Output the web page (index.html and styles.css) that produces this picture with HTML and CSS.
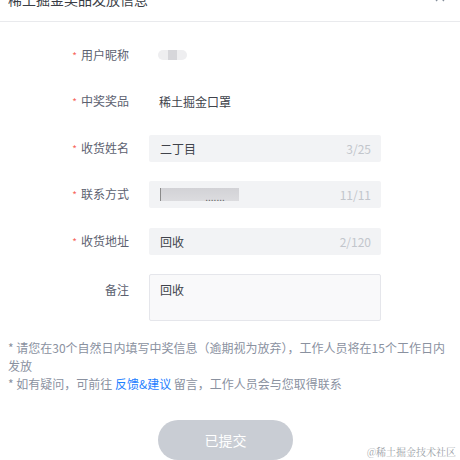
FILE: index.html
```html
<!DOCTYPE html>
<html lang="zh-CN">
<head>
<meta charset="utf-8">
<link rel="stylesheet" href="styles.css">
</head>
<body>
<div class="dialog">
  <div class="header">
    <div class="title">稀土掘金奖品发放信息</div>
    <svg class="close" width="10" height="10" viewBox="0 0 10 10"><path d="M1 1L9 9M9 1L1 9" stroke="#86909c" stroke-width="1.3" fill="none"/></svg>
  </div>
  <div class="form">
    <div class="row">
      <div class="label req">用户昵称</div>
      <div class="value"><span class="blur-nick"><span class="blur-core"></span></span></div>
    </div>
    <div class="row">
      <div class="label req">中奖奖品</div>
      <div class="value">稀土掘金口罩</div>
    </div>
    <div class="row">
      <div class="label req">收货姓名</div>
      <div class="input"><span class="text">二丁目</span><span class="count">3/25</span></div>
    </div>
    <div class="row">
      <div class="label req">联系方式</div>
      <div class="input"><span class="blur-phone"><span class="dots">.......</span></span><span class="count">11/11</span></div>
    </div>
    <div class="row">
      <div class="label req">收货地址</div>
      <div class="input"><span class="text">回收</span><span class="count">2/120</span></div>
    </div>
    <div class="row top">
      <div class="label">备注</div>
      <div class="textarea">回收</div>
    </div>
  </div>
  <div class="notes">
    <p>* 请您在30个自然日内填写中奖信息（逾期视为放弃），工作人员将在15个工作日内发放</p>
    <p>* 如有疑问，可前往 <a class="link">反馈&amp;建议</a> 留言，工作人员会与您取得联系</p>
  </div>
  <div class="actions">
    <button class="submit">已提交</button>
  </div>
  <div class="watermark">@稀土掘金技术社区</div>
</div>
</body>
</html>
```
FILE: styles.css
```css
* { box-sizing: border-box; }
html, body { margin: 0; padding: 0; background: #fff; }
body {
  font-family: "Noto Sans CJK SC", "Noto Sans", sans-serif;
  color: #3a3d45;
  width: 460px;
  height: 460px;
  overflow: hidden;
}
.dialog { position: relative; height: 460px; }
.header {
  height: 22px;
  border-bottom: 1px solid #e9eaed;
  display: flex;
  justify-content: space-between;
  align-items: flex-start;
  padding: 0 15px 0 8px;
}
.title {
  font-size: 14px;
  line-height: 20px;
  margin-top: -11px;
  color: #3a3d45;
}
.close { margin-top: -8px; }
.form {
  padding: 19.5px 0 0 8px;
  display: flex;
  flex-direction: column;
  gap: 19.6px;
}
.row {
  display: grid;
  grid-template-columns: 121px 232px;
  column-gap: 20px;
  align-items: center;
  height: 27px;
}
.row.top { align-items: start; height: auto; }
.label {
  text-align: right;
  font-size: 12px;
  line-height: 18px;
  color: #5c6170;
}
.row.top .label { padding-top: 7px; }
.label.req::before {
  content: "*";
  color: #f76560;
  margin-right: 4px;
  font-size: 10px;
}
.value {
  font-size: 12px;
  color: #40434b;
  padding-left: 10px;
  display: flex;
  align-items: center;
}
.blur-nick {
  width: 29px;
  height: 10px;
  border-radius: 5px;
  background: #eeeef0;
  margin-left: -1px;
  display: flex;
  justify-content: center;
}
.blur-core {
  width: 9px;
  height: 10px;
  background: #d6d6da;
}
.input {
  height: 27px;
  background: #f2f3f5;
  border-radius: 2px;
  display: flex;
  align-items: center;
  justify-content: space-between;
  padding: 0 10px 0 11px;
  font-size: 12px;
  color: #40434b;
}
.count { color: #c2c6cc; font-size: 12px; }
.blur-phone {
  display: inline-flex;
  align-items: flex-end;
  justify-content: center;
  width: 79px;
  height: 13px;
  background: linear-gradient(#d2d2d6, #dcdcdf);
  border-left: 1px solid #8a8a8a;
  font-size: 10px;
  line-height: 8px;
  color: #666;
}
.blur-phone .dots { padding-left: 30px; }
.textarea {
  height: 47px;
  background: #f9f9fa;
  border: 1px solid #e5e6eb;
  border-radius: 2px;
  padding: 6px 10px;
  font-size: 12px;
  line-height: 18px;
  color: #40434b;
}
.notes {
  padding: 17.5px 8px 0;
  font-size: 12px;
  line-height: 18px;
  color: #8a919f;
}
.notes p { margin: 0; }
.link { color: #1e80ff; text-decoration: none; }
.actions {
  padding: 27px 0 0 158px;
}
.submit {
  width: 135px;
  height: 40px;
  border: 0;
  border-radius: 20px;
  background: #c9cdd4;
  color: #fff;
  font-family: "Noto Sans CJK SC", sans-serif;
  font-size: 14px;
}
.watermark {
  position: absolute;
  right: 4px;
  bottom: 1px;
  font-family: "Noto Serif CJK SC", "Noto Sans CJK SC", serif;
  font-size: 10px;
  color: #9aa0a6;
  line-height: 14px;
}
```
